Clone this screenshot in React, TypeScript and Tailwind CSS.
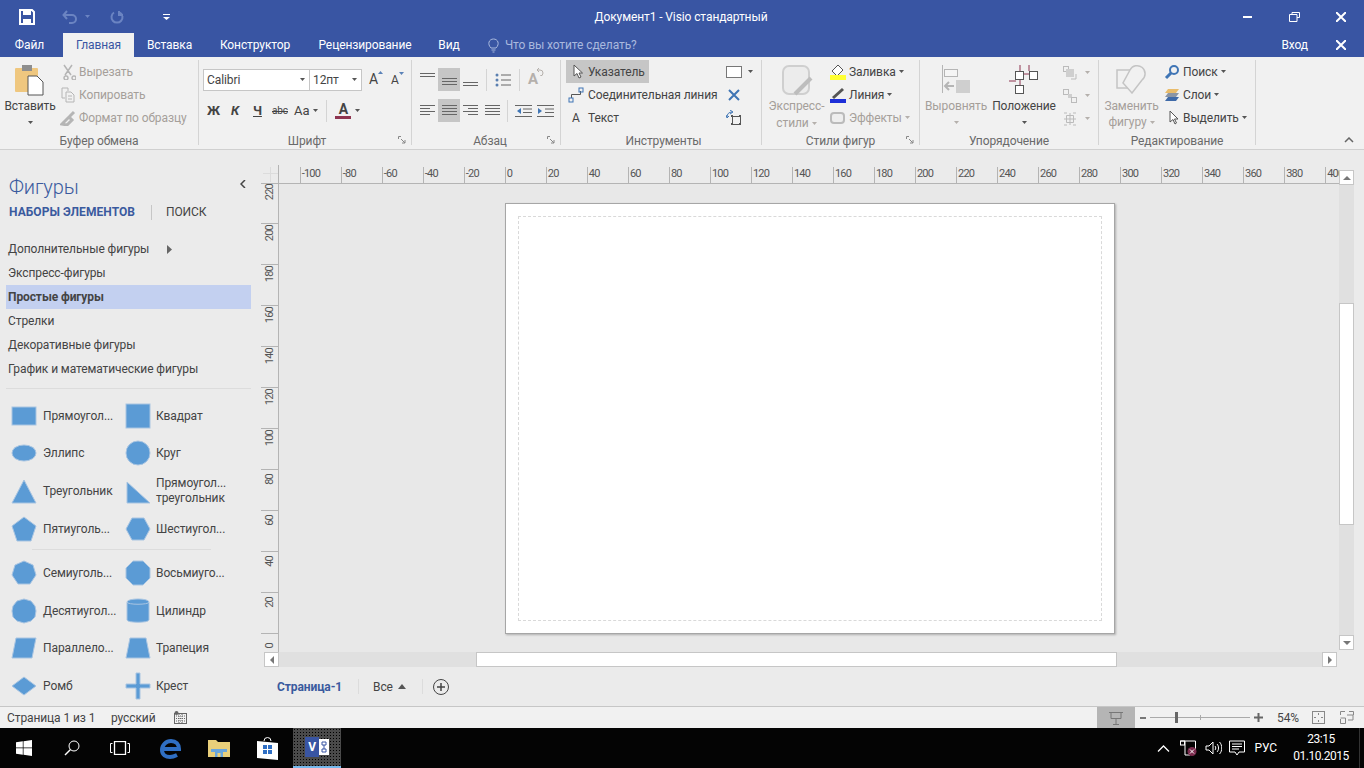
import type { ReactNode } from "react";

const hTicks = Array.from({ length: 27 }, (_, i) => -120 + i * 20);
const vTicks = Array.from({ length: 12 }, (_, i) => 220 - i * 20);

const stencils = ["Дополнительные фигуры", "Экспресс-фигуры", "Простые фигуры", "Стрелки", "Декоративные фигуры", "График и математические фигуры"];

const Caret = ({ dim = false }: { dim?: boolean }) => (
  <svg width="5" height="3" viewBox="0 0 5 3" className="shrink-0">
    <polygon points="0,0 5,0 2.500,3" fill={dim ? "#b5b0ac" : "#555"} />
  </svg>
);

const Shape = ({ children }: { children: ReactNode }) => (
  <svg width="26" height="28" viewBox="0 0 26 28" className="shrink-0">
    <g fill="#5b9bd5" stroke="#a9c5e2" strokeWidth="1">{children}</g>
  </svg>
);

const shapesTop: [string, ReactNode, string, ReactNode][] = [
  ["Прямоугол...", <rect x="1" y="5" width="24" height="18" />, "Квадрат", <rect x="1" y="2" width="24" height="24" />],
  ["Эллипс", <ellipse cx="13" cy="14" rx="12" ry="8" />, "Круг", <circle cx="13" cy="14" r="12" />],
  ["Треугольник", <polygon points="13,3 25,26 1,26" />, "", <polygon points="2,5 25,26 2,26" />],
  ["Пятиуголь...", <polygon points="13,2 25,11 20,26 6,26 1,11" />, "Шестиугол...", <polygon points="7,3 19,3 25,14 19,25 7,25 1,14" />],
];

const shapesBottom: [string, ReactNode, string, ReactNode][] = [
  ["Семиуголь...", <polygon points="13,2 22,6 25,16 19,25 7,25 1,16 4,6" />, "Восьмиуго...", <polygon points="8,2 18,2 25,9 25,19 18,26 8,26 1,19 1,9" />],
  ["Десятиугол...", <polygon points="13,2 20,4 24,9 25,14 24,20 20,24 13,26 6,24 2,20 1,14 2,9 6,4" />, "Цилиндр", <><path d="M2 5c0-4 22-4 22 0v18c0 3-22 3-22 0z" /><path d="M2 5c0 3 22 3 22 0" fill="none" /></>],
  ["Параллело...", <polygon points="5,4 25,4 21,24 1,24" />, "Трапеция", <polygon points="5,4 21,4 25,24 1,24" />],
  ["Ромб", <polygon points="13,5 25,14 13,23 1,14" />, "Крест", <polygon points="11,1 15,1 15,12 25,12 25,16 15,16 15,27 11,27 11,16 1,16 1,12 11,12" />],
];

const ShapeRow = ({ row }: { row: [string, ReactNode, string, ReactNode] }) => (
  <div className="flex h-[37.6px] items-center pl-[11px]">
    <div className="flex w-[114px] items-center gap-[6px]">
      <Shape>{row[1]}</Shape>
      <span>{row[0]}</span>
    </div>
    <div className="flex items-center gap-[5px]">
      <Shape>{row[3]}</Shape>
      {row[2] ? <span>{row[2]}</span> : <span className="leading-[15px]">Прямоугол...<br />треугольник</span>}
    </div>
  </div>
);

const Lines = ({ rows }: { rows: [number, number][] }) => (
  <svg width="15" height="16" viewBox="0 0 15 16" stroke="#666" strokeWidth="1">
    {rows.map(([y, w], i) => (
      <line key={i} x1={w < 0 ? 15 + w : 0} x2={w < 0 ? 15 : w} y1={y + 0.5} y2={y + 0.5} />
    ))}
  </svg>
);

const Group = ({ label, className, launcher, children }: { label: string; className: string; launcher?: boolean; children: ReactNode }) => (
  <section className={`relative flex h-[85px] shrink-0 flex-col border-r border-[#d4d4d4] ${className}`}>
    <div className="flex h-[74px] shrink-0">{children}</div>
    <div className="flex h-[13px] shrink-0 items-center justify-center leading-none text-[#6a6a6a]">{label}</div>
    {launcher && (
      <svg width="8" height="8" viewBox="0 0 8 8" className="absolute right-[5px] bottom-[1px]" fill="none" stroke="#888">
        <path d="M.5 3V.5H3M3 3l4 4M7 4v3H4" />
      </svg>
    )}
  </section>
);

const TaskIcon = ({ className, children }: { className: string; children: ReactNode }) => (
  <div className={`flex shrink-0 items-center justify-center ${className}`}>{children}</div>
);

const ScrollBtn = ({ dir }: { dir: "u" | "d" | "l" | "r" }) => (
  <div className="flex h-[15px] w-[15px] shrink-0 items-center justify-center border border-[#c6c6c6] bg-white">
    <svg width="8" height="8" viewBox="0 0 8 8" fill="#777">
      {dir === "u" && <polygon points="0,6 8,6 4,2" />}
      {dir === "d" && <polygon points="0,2 8,2 4,6" />}
      {dir === "l" && <polygon points="6,0 6,8 2,4" />}
      {dir === "r" && <polygon points="2,0 2,8 6,4" />}
    </svg>
  </div>
);

export default function App() {
  return (
    <div className="flex h-[768px] w-[1364px] flex-col overflow-hidden bg-[#ebebeb] font-['Roboto','Liberation_Sans',sans-serif] text-[12px] tracking-[-0.1px] text-[#444]">
      {/* заголовок окна */}
      <header className="flex h-[33px] shrink-0 items-center bg-[#3955a3] text-white">
        <div className="flex w-[546px] items-center pl-[19px]">
          <svg width="16" height="16" viewBox="0 0 16 16" className="mr-[27px]">
            <path d="M1 1h12l2 2v12H1z" fill="none" stroke="#fff" strokeWidth="2" />
            <rect x="4" y="1" width="8" height="5" fill="#fff" />
            <rect x="4" y="10" width="8" height="5" fill="#fff" />
          </svg>
          <svg width="16" height="14" viewBox="0 0 16 14" fill="none" stroke="#6b84c2" strokeWidth="2" className="mr-[7px]">
            <path d="M5 1 1.500 5 5 9M2 5h8a3.500 3.500 0 0 1 0 8H7" />
          </svg>
          <svg width="5" height="3" viewBox="0 0 5 3" className="mr-[20px]"><polygon points="0,0 5,0 2.500,3" fill="#6b84c2" /></svg>
          <svg width="14" height="14" viewBox="0 0 14 14" fill="none" stroke="#6b84c2" strokeWidth="2" className="mr-[39px]">
            <path d="M4 2.500a5.500 5.500 0 1 0 6 0M9 1v4h4" />
          </svg>
          <svg width="7" height="6" viewBox="0 0 7 6" fill="#fff"><rect width="7" height="1" /><polygon points="0,3 7,3 3.500,6" /></svg>
        </div>
        <div className="w-[270px] text-center text-[12px]">Документ1 - Visio стандартный</div>
        <div className="ml-auto flex items-center">
          <div className="mr-[37px] h-[2px] w-[9px] bg-white" />
          <svg width="11" height="10" viewBox="0 0 11 10" fill="none" stroke="#fff" className="mr-[36px]">
            <path d="M3 2.500V.5h7.500v5H8M.5 2.500h7.500v7H.5z" />
          </svg>
          <svg width="10" height="10" viewBox="0 0 10 10" stroke="#fff" strokeWidth="2" className="mr-[18px]"><path d="M0 0l10 10M10 0 0 10" /></svg>
        </div>
      </header>

      {/* вкладки */}
      <nav className="flex h-[24px] shrink-0 items-center bg-[#3955a3] text-white">
        <div className="w-[63px] pr-[4px] text-center">Файл</div>
        <div className="flex h-full w-[71px] items-center justify-center bg-[#f1f1f1] text-[#3955a3]">Главная</div>
        <div className="w-[71px] text-center">Вставка</div>
        <div className="w-[100px] text-center">Конструктор</div>
        <div className="w-[120px] text-center">Рецензирование</div>
        <div className="w-[48px] text-center">Вид</div>
        <svg width="11" height="15" viewBox="0 0 11 15" fill="none" stroke="#a9b9de" className="ml-[15px] mr-[6px]">
          <path d="M3 10C-1 6 1 1 5.500 1S12 6 8 10zM3.500 12h4M4.500 14h2" />
        </svg>
        <div className="text-[#a9b9de]">Что вы хотите сделать?</div>
        <div className="ml-auto mr-[28px]">Вход</div>
        <svg width="10" height="10" viewBox="0 0 10 10" stroke="#fff" strokeWidth="2" className="mr-[18px]"><path d="M0 0l10 10M10 0 0 10" /></svg>
      </nav>

      {/* лента */}
      <div className="relative flex h-[93px] shrink-0 items-start border-b border-[#d0d0d0] bg-[#f1f1f1] pt-[3px]">
        <Group label="Буфер обмена" launcher={false} className="w-[199px]">
          <div className="flex w-[60px] flex-col items-center">
            <svg width="30" height="32" viewBox="0 0 30 32" className="mt-[4px] -translate-x-[1px]">
              <rect x="1" y="4" width="23" height="24" rx="1" fill="#efc77f" />
              <rect x="8" y="1" width="10" height="6" fill="#8e8e8e" />
              <path d="M14 12h9l6 6v13H14z" fill="#fff" stroke="#555" />
            </svg>
            <div className="mt-[3px] leading-[15px]">Вставить</div>
            <div className="mt-[7px]"><Caret /></div>
          </div>
          <div className="flex flex-col text-[#a59f9a]">
            {["Вырезать", "Копировать", "Формат по образцу"].map((t, i) => (
              <div key={t} className="flex h-[23px] items-center gap-[3px]">
                <svg width="16" height="16" viewBox="0 0 16 16" fill="none" stroke="#b5b5b5" strokeWidth="1.500">
                  {i === 0 && <path d="M4 1l7 10M12 1 5 11M4 14a2 2 0 1 0 0-.1zM12 14a2 2 0 1 0 0-.1z" />}
                  {i === 1 && <path d="M2 1h6v3M2 1v10h3M6 5h5l3 3v7H6zM8 9h4M8 12h4" strokeWidth="1" />}
                  {i === 2 && <path d="M2 14l7-7 3 3-5 5zM10 6l4-4" strokeWidth="3" />}
                </svg>
                <span>{t}</span>
              </div>
            ))}
          </div>
        </Group>

        <Group label="Шрифт" launcher className="w-[213px] pl-[4px]">
          <div className="flex flex-col">
            <div className="mt-[8px] flex h-[23px] items-center">
              <div className="flex h-[22px] w-[107px] items-center justify-between border border-[#c6c6c6] bg-white pl-[3px] pr-[4px]">Calibri <Caret /></div>
              <div className="flex h-[22px] w-[52px] items-center justify-between border border-l-0 border-[#c6c6c6] bg-white pl-[3px] pr-[4px]">12пт <Caret /></div>
              <span className="relative ml-[7px] text-[14px]">A<svg width="5" height="3" viewBox="0 0 5 3" className="absolute -right-[5px] top-[2px]"><polygon points="0,3 5,3 2.500,0" fill="#5a82b8" /></svg></span>
              <span className="relative ml-[13px] text-[12px]">A<svg width="5" height="3" viewBox="0 0 5 3" className="absolute -right-[5px] top-[1px]"><polygon points="0,0 5,0 2.500,3" fill="#5a82b8" /></svg></span>
            </div>
            <div className="mt-[8px] flex h-[23px] items-center">
              <b className="ml-[4px] w-[24px] text-[13px]">Ж</b>
              <b className="w-[22px] text-[13px] italic">К</b>
              <b className="w-[19px] text-[13px] underline">Ч</b>
              <span className="w-[22px] text-[10px] line-through">abc</span>
              <span className="mr-[4px] text-[13px]">Aa</span>
              <Caret />
              <div className="mx-[8px] h-[22px] w-px bg-[#d4d4d4]" />
              <div className="mr-[4px] flex w-[16px] flex-col items-center">
                <b className="text-[14px] leading-[14px]">A</b>
                <div className="h-[3px] w-[16px] bg-[#8e3450]" />
              </div>
              <Caret />
            </div>
          </div>
        </Group>

        <Group label="Абзац" launcher className="w-[149px] pl-[8px]">
          <div className="flex flex-col">
            <div className="mt-[8px] flex h-[23px] items-center">
              <Lines rows={[[1, 15], [4, 15]]} />
              <div className="mx-[3px] flex h-[23px] w-[22px] items-center justify-center bg-[#c6c6c6]"><Lines rows={[[6, 15], [9, 15], [12, 15]]} /></div>
              <Lines rows={[[10, 15], [13, 15]]} />
              <div className="mx-[8px] h-[22px] w-px bg-[#d4d4d4]" />
              <svg width="16" height="16" viewBox="0 0 16 16"><g fill="#5a7fb0"><circle cx="2" cy="3" r="1.500" /><circle cx="2" cy="8" r="1.500" /><circle cx="2" cy="13" r="1.500" /></g><path d="M6 3h10M6 8h10M6 13h10" stroke="#666" /></svg>
              <div className="mx-[8px] h-[22px] w-px bg-[#d4d4d4]" />
              <span className="relative text-[15px] font-bold text-[#b5b0ac]">A<svg width="8" height="9" viewBox="0 0 8 9" fill="none" stroke="#b5b0ac" className="absolute -right-[6px] -top-[1px]"><path d="M3 1 1 3l2 2M1 3h3a3 3 0 0 1 0 6" /></svg></span>
            </div>
            <div className="mt-[8px] flex h-[23px] items-center">
              <Lines rows={[[2, 15], [5, 10], [8, 15], [11, 10]]} />
              <div className="mx-[3px] flex h-[23px] w-[22px] items-center justify-center bg-[#c6c6c6]"><Lines rows={[[2, 15], [5, 15], [8, 15], [11, 15]]} /></div>
              <Lines rows={[[2, 15], [5, -10], [8, 15], [11, -10]]} />
              <div className="w-[7px]" />
              <Lines rows={[[2, 15], [5, 15], [8, 15], [11, 15]]} />
              <div className="mx-[7px] h-[22px] w-px bg-[#d4d4d4]" />
              <svg width="17" height="14" viewBox="0 0 17 14" className="mr-[5px]"><path d="M0 1.500h17M8 5h9M8 8.500h9M0 12.500h17" stroke="#666" /><path d="M6 4 2 7l4 3z" fill="#3f75b5" /></svg>
              <svg width="17" height="14" viewBox="0 0 17 14"><path d="M0 1.500h17M8 5h9M8 8.500h9M0 12.500h17" stroke="#666" /><path d="M1 4l4 3-4 3z" fill="#3f75b5" /></svg>
            </div>
          </div>
        </Group>

        <Group label="Инструменты" className="w-[201px] pl-[5px]">
          <div className="flex w-[155px] flex-col">
            <div className="flex h-[23px] w-[83px] items-center bg-[#c6c6c6] pl-[7px]">
              <svg width="10" height="15" viewBox="0 0 10 15" fill="#fff" stroke="#555" className="mr-[5px]"><path d="M1 1v11l3-2.500 2 4.500 2-1-2-4h3.500z" /></svg>
              Указатель
            </div>
            <div className="flex h-[23px] items-center pl-[2px]">
              <svg width="16" height="16" viewBox="0 0 16 16" fill="none" className="mr-[4px]"><path d="M3.500 11V7.500h9V4" stroke="#555" /><rect x="1" y="11" width="4" height="4" stroke="#3f75b5" /><rect x="11" y="1" width="4" height="4" stroke="#3f75b5" /></svg>
              Соединительная линия
            </div>
            <div className="flex h-[23px] items-center pl-[6px]">
              <span className="mr-[8px] w-[8px] text-[12px]">A</span>
              Текст
            </div>
          </div>
          <div className="flex flex-col">
            <div className="flex h-[23px] items-center">
              <div className="mr-[6px] ml-[5px] h-[12px] w-[16px] border border-[#777] bg-white" />
              <Caret />
            </div>
            <div className="flex h-[23px] items-center pl-[7px]">
              <svg width="12" height="12" viewBox="0 0 12 12" stroke="#3f75b5" strokeWidth="2"><path d="M1 1l10 10M11 1 1 11" /></svg>
            </div>
            <div className="flex h-[23px] items-center pl-[5px]">
              <svg width="16" height="16" viewBox="0 0 16 16" fill="none"><rect x="6.500" y="6.500" width="8" height="8" stroke="#555" /><path d="M1 7c0-3 2-5 5-5M4 0l3 2-3 2M0 5l1 3 2-2" stroke="#3f75b5" /><g fill="#555"><rect x="5" y="5" width="2" height="2" /><rect x="13" y="5" width="2" height="2" /><rect x="5" y="13" width="2" height="2" /><rect x="13" y="13" width="2" height="2" /></g></svg>
            </div>
          </div>
        </Group>

        <Group label="Стили фигур" launcher className="w-[158px] text-[#a59f9a]">
          <div className="flex w-[68px] flex-col items-center pl-[1px]">
            <svg width="32" height="32" viewBox="0 0 32 32" className="mt-[4px]">
              <rect x="2" y="2" width="26" height="28" rx="6" fill="#ececec" stroke="#cfcfcf" strokeWidth="2" />
              <path d="M14 30 30 14" stroke="#bdbdbd" strokeWidth="4" />
            </svg>
            <div className="mt-[3px] leading-[15px]">Экспресс-</div>
            <div className="mt-[1px] flex items-center gap-[3px] leading-[16px]">стили <Caret dim /></div>
          </div>
          <div className="flex flex-col">
            <div className="flex h-[23px] items-center text-[#444]">
              <svg width="16" height="16" viewBox="0 0 16 16" className="mr-[3px]"><path d="M8 1 2 7l5 5 6-6z" fill="#fff" stroke="#555" /><rect y="11" width="16" height="5" fill="#ffff33" /></svg>
              <span className="mr-[3px]">Заливка</span><Caret />
            </div>
            <div className="flex h-[23px] items-center text-[#444]">
              <svg width="16" height="16" viewBox="0 0 16 16" className="mr-[3px]"><path d="M3 11 13 2" stroke="#555" strokeWidth="3" /><rect y="12" width="16" height="4" fill="#1d2fd8" /></svg>
              <span className="mr-[3px]">Линия</span><Caret />
            </div>
            <div className="flex h-[23px] items-center">
              <svg width="16" height="16" viewBox="0 0 16 16" className="mr-[3px]"><rect x="1" y="3" width="13" height="10" rx="3" fill="#eee" stroke="#bbb" strokeWidth="2" /></svg>
              <span className="mr-[3px]">Эффекты</span><Caret dim />
            </div>
          </div>
        </Group>

        <Group label="Упорядочение" className="w-[179px]">
          <div className="flex w-[72px] flex-col items-center text-[#a59f9a]">
            <svg width="28" height="30" viewBox="0 0 28 30" className="mt-[5px]">
              <path d="M.5 0v28" stroke="#b5b5b5" />
              <rect x="2.500" y="4.500" width="13" height="7" fill="#f5f5f5" stroke="#b5b5b5" />
              <rect x="14" y="15" width="14" height="13" fill="#cfcfcf" />
              <path d="M3 21h9M7 17l-4 4 4 4" stroke="#b5b5b5" strokeWidth="2" fill="none" />
            </svg>
            <div className="mt-[4px] leading-[15px]">Выровнять</div>
            <div className="mt-[7px]"><Caret dim /></div>
          </div>
          <div className="flex w-[64px] flex-col items-center">
            <svg width="30" height="30" viewBox="0 0 30 30" className="mt-[5px]" fill="#fff">
              <path d="M0 16h7M7 9h13M11 0v6M20 0v6M11 13v8" stroke="#8e3450" fill="none" />
              <rect x="6.500" y="6.500" width="8" height="8" stroke="#555" />
              <rect x="20.500" y="6.500" width="8" height="8" stroke="#555" />
              <rect x="6.500" y="20.500" width="8" height="8" stroke="#555" />
            </svg>
            <div className="mt-[4px] leading-[15px]">Положение</div>
            <div className="mt-[7px]"><Caret /></div>
          </div>
          <div className="flex flex-col pl-[7px] pt-[1px]">
            {[0, 1, 2].map(i => (
              <div key={i} className="flex h-[23px] items-center gap-[8px]">
                <svg width="14" height="14" viewBox="0 0 14 14" fill="none" stroke="#bbb">
                  {i === 0 && <><rect x=".5" y=".5" width="5" height="5" /><rect x="3" y="3" width="8" height="8" fill="#cfcfcf" stroke="none" /><path d="M13 8v5H8" /></>}
                  {i === 1 && <><rect x=".5" y=".5" width="5" height="5" /><rect x="5" y="5" width="4" height="4" fill="#cfcfcf" stroke="none" /><rect x="8.500" y="8.500" width="5" height="5" /></>}
                  {i === 2 && <path d="M1 1h3M10 1h3M1 13h3M10 13h3M3.500 3.500h7v7h-7zM7 1v12M1 7h12" />}
                </svg>
                <Caret dim />
              </div>
            ))}
          </div>
        </Group>

        <Group label="Редактирование" className="w-[157px]">
          <div className="flex w-[65px] flex-col items-center text-[#a59f9a]">
            <svg width="32" height="30" viewBox="0 0 32 30" className="mt-[4px] ml-[1px]" fill="none" stroke="#c4c4c4" strokeWidth="1.500">
              <rect x="1" y="6" width="18" height="18" />
              <path d="M14 6a8 8 0 1 1 12 10L16 29 7 19z" fill="#f1f1f1" />
            </svg>
            <div className="mt-[5px] leading-[15px]">Заменить</div>
            <div className="flex items-center gap-[3px] leading-[16px]">фигуру <Caret dim /></div>
          </div>
          <div className="flex flex-col">
            {["Поиск", "Слои", "Выделить"].map((t, i) => (
              <div key={t} className="flex h-[23px] items-center">
                <svg width="16" height="16" viewBox="0 0 16 16" fill="none" className="mr-[3px] shrink-0">
                  {i === 0 && <><circle cx="10" cy="6" r="4" stroke="#3f75b5" strokeWidth="2" /><path d="M7 9l-5 5" stroke="#3f75b5" strokeWidth="3" /></>}
                  {i === 1 && <><polygon points="4,2 15,2 12,6 1,6" fill="#e9bc6b" /><polygon points="4,6 15,6 12,10 1,10" fill="#8c96a5" /><polygon points="4,10 15,10 12,14 1,14" fill="#3f6aa8" /></>}
                  {i === 2 && <path d="M6 1v11l3-2.500 2 4.500 1.500-1-2-4H14z" fill="#fff" stroke="#555" />}
                </svg>
                <span className="mr-[3px]">{t}</span><Caret />
              </div>
            ))}
          </div>
        </Group>

        <svg width="10" height="6" viewBox="0 0 10 6" fill="none" stroke="#666" strokeWidth="1.500" className="absolute right-[10px] bottom-[6px]"><path d="M1 5l4-4 4 4" /></svg>
      </div>

      {/* основная часть */}
      <div className="flex h-[556px] shrink-0">
        <aside className="flex w-[261px] shrink-0 flex-col">
          <div className="flex h-[51px] shrink-0 items-end justify-between pl-[9px] pr-[15px]">
            <span className="text-[20px] font-light leading-[28px] text-[#3a5a9e]">Фигуры</span>
            <svg width="6" height="8" viewBox="0 0 6 8" className="mb-[13px]"><path d="M5 0 1 4l4 4" fill="none" stroke="#444" strokeWidth="1.500" /></svg>
          </div>
          <div className="flex h-[21px] shrink-0 items-center pl-[9px] pt-[1px]">
            <b className="w-[142px] tracking-[0.05px] text-[#3a5a9e]">НАБОРЫ ЭЛЕМЕНТОВ</b>
            <div className="mr-[14px] h-[15px] w-px bg-[#c6c6c6]" />
            <span>ПОИСК</span>
          </div>
          <ul className="ml-[6px] mt-[15px] w-[245px]">
            {stencils.map((s, i) => (
              <li key={s} className={`flex h-[24px] items-center pl-[2px] ${i === 2 ? "bg-[#c3d0f0] font-bold" : ""}`}>
                {s}
                {i === 0 && <svg width="5" height="9" viewBox="0 0 5 9" className="ml-[18px]"><polygon points="0,0 5,4.500 0,9" fill="#666" /></svg>}
              </li>
            ))}
          </ul>
          <div className="ml-[6px] mt-[7px] h-px w-[245px] bg-[#dcdcdc]" />
          <div className="mt-[8px]">
            {shapesTop.map((r, i) => <ShapeRow key={i} row={r} />)}
          </div>
          <div className="ml-[32px] mt-[2px] h-px w-[179px] bg-[#dcdcdc]" />
          <div className="mt-[4px]">
            {shapesBottom.map((r, i) => <ShapeRow key={i} row={r} />)}
          </div>
        </aside>

        <div className="flex min-w-0 flex-1 flex-col">
          <div className="flex h-[502px] shrink-0 pt-[15px]">
            <div className="flex w-[1078px] shrink-0 flex-col">
              <div className="flex h-[19px] shrink-0">
                <div className="relative w-[18px] shrink-0 border-b border-r border-[#b4b4b4]">
                  <div className="absolute left-[2px] top-[8px] h-px w-[15px] bg-[#dcdcdc]" />
                  <div className="absolute left-[9px] top-[2px] h-[15px] w-px bg-[#dcdcdc]" />
                </div>
                <div className="flex flex-1 overflow-hidden border-b border-[#b4b4b4] pt-[2px]">
                  <div className="-ml-[20.28px] flex">
                    {hTicks.map(t => (
                      <div key={t} className="h-[16px] w-[41.03px] shrink-0 border-l border-[#b4b4b4] pl-[1px] text-[11px] leading-[14px] tracking-[-0.8px] text-[#555]">{t > -120 ? t : ""}</div>
                    ))}
                  </div>
                </div>
              </div>
              <div className="flex min-h-0 flex-1">
                <div className="w-[18px] shrink-0 overflow-hidden border-r border-[#b4b4b4]">
                  <div className="-mt-[1.7px]">
                    {vTicks.map(t => (
                      <div key={t} className="h-[41.03px] border-t border-[#b4b4b4] pl-[2px] pt-[1px]">
                        <span className="rotate-180 text-[11px] leading-[13px] tracking-[-0.8px] text-[#555] [writing-mode:vertical-rl]">{t}</span>
                      </div>
                    ))}
                  </div>
                </div>
                <main className="flex-1 bg-[#e8e8e8] pl-[226px] pt-[19px]">
                  <div className="h-[431px] w-[610px] border border-[#a6a6a6] bg-white p-[12px] shadow-[1px_1px_2px_rgba(0,0,0,0.25)]">
                    <div className="h-full w-full border border-dashed border-[#d9d9d9]" />
                  </div>
                </main>
              </div>
            </div>
            <div className="mt-[5px] flex h-[480px] w-[15px] shrink-0 flex-col self-start">
              <ScrollBtn dir="u" />
              <div className="min-h-0 flex-1 bg-[#e0e0e0] pt-[118px]">
                <div className="h-[222px] border border-[#c6c6c6] bg-white" />
              </div>
              <ScrollBtn dir="d" />
            </div>
          </div>
          <div className="flex h-[15px] shrink-0 pl-[3px]">
            <ScrollBtn dir="l" />
            <div className="w-[1043px] bg-[#e0e0e0] pl-[197px]">
              <div className="h-[15px] w-[641px] border border-[#c6c6c6] bg-white" />
            </div>
            <ScrollBtn dir="r" />
          </div>
          <div className="flex h-[39px] shrink-0 items-center pl-[16px]">
            <b className="w-[81px] text-[#3a5a9e]">Страница-1</b>
            <div className="mr-[14px] h-[15px] w-px bg-[#dcdcdc]" />
            <span className="w-[25px]">Все</span>
            <svg width="8" height="5" viewBox="0 0 8 5" className="shrink-0"><polygon points="0,5 8,5 4,0" fill="#555" /></svg>
            <div className="ml-[16px] mr-[10px] h-[15px] w-px bg-[#dcdcdc]" />
            <svg width="16" height="16" viewBox="0 0 16 16" fill="none" stroke="#444">
              <circle cx="8" cy="8" r="7.500" />
              <path d="M8 4v8M4 8h8" strokeWidth="1.500" />
            </svg>
          </div>
        </div>
      </div>

      {/* строка состояния */}
      <footer className="flex h-[22px] shrink-0 items-center border-t border-[#c6c6c6] bg-[#f1f1f1] pl-[7px]">
        <span className="w-[104px]">Страница 1 из 1</span>
        <span className="w-[63px]">русский</span>
        <svg width="13" height="13" viewBox="0 0 13 13" fill="none" stroke="#666"><rect x=".5" y="2.500" width="12" height="10" /><path d="M2 5h9M2 7.500h9M2 10h9M5 3v9M8 3v9" strokeDasharray="1 1" /><circle cx="2.500" cy="2" r="2" fill="#666" stroke="none" /></svg>
        <div className="ml-auto flex h-full w-[38px] items-center justify-center bg-[#b5b5b5]">
          <svg width="14" height="14" viewBox="0 0 14 14" fill="none" stroke="#777"><path d="M0 1.500h14M2 1.500v6h10v-6M7 8v5M4 13.500h6" /></svg>
        </div>
        <div className="ml-[5px] h-[2px] w-[6px] bg-[#777]" />
        <div className="relative ml-[4px] h-px w-[100px] bg-[#aaa]">
          <div className="absolute left-[25px] -top-[5px] h-[11px] w-[3px] bg-[#666]" />
          <div className="absolute left-[50px] -top-[2px] h-[5px] w-px bg-[#aaa]" />
        </div>
        <svg width="9" height="9" viewBox="0 0 9 9" stroke="#666" strokeWidth="2" className="ml-[4px]"><path d="M4.500 0v9M0 4.500h9" /></svg>
        <span className="ml-[14px] w-[35px]">54%</span>
        <svg width="13" height="13" viewBox="0 0 13 13" fill="none" stroke="#888"><rect x=".5" y=".5" width="12" height="12" /><path d="M6.500 2v2M6.500 9v2M2 6.500h2M9 6.500h2" /></svg>
        <svg width="14" height="13" viewBox="0 0 14 13" fill="none" stroke="#888" className="ml-[15px] mr-[10px]"><path d="M.5 4V.5H5M9 .5h4.500V4M.5 8v4.500h5V7h-5M7 4h6v5H8" /></svg>
      </footer>

      {/* панель задач */}
      <div className="flex h-[40px] shrink-0 items-center bg-[#040404] text-white">
        <TaskIcon className="w-[48px]">
          <svg width="16" height="16" viewBox="0 0 16 16" fill="#fff"><polygon points="0,2.300 6.800,1.300 6.800,7.500 0,7.500" /><polygon points="7.500,1.200 16,0 16,7.500 7.500,7.500" /><polygon points="0,8.300 6.800,8.300 6.800,14.700 0,13.700" /><polygon points="7.500,8.300 16,8.300 16,16 7.500,14.800" /></svg>
        </TaskIcon>
        <TaskIcon className="w-[48px]">
          <svg width="16" height="16" viewBox="0 0 16 16" fill="none" stroke="#fff"><circle cx="10" cy="6" r="5" /><path d="M6.500 9.500 1 15" strokeWidth="1.500" /></svg>
        </TaskIcon>
        <TaskIcon className="w-[48px]">
          <svg width="20" height="14" viewBox="0 0 20 14" fill="none" stroke="#fff"><rect x="4.500" y=".5" width="11" height="13" strokeWidth="1.300" /><path d="M2.500 2.500h-2v9h2M17.500 2.500h2v9h-2" /></svg>
        </TaskIcon>
        <TaskIcon className="w-[52px]">
          <svg width="21" height="21" viewBox="0 0 21 21" fill="none" stroke="#2f6fc4" strokeWidth="4"><path d="M3 11h16c0-5-3-8-8-8-5 0-9 4-9 9 0 5 4 7 8 7 3 0 5-1 7-2" /></svg>
        </TaskIcon>
        <TaskIcon className="w-[46px]">
          <svg width="22" height="18" viewBox="0 0 22 18"><path d="M0 1h8l2 2h12v15H0z" fill="#e9cf7a" /><rect x="3" y="10" width="16" height="3" fill="#6aa6dc" /><rect x="7" y="11" width="8" height="7" fill="#6aa6dc" /><rect x="9.500" y="14" width="3" height="4" fill="#e9cf7a" /></svg>
        </TaskIcon>
        <TaskIcon className="w-[51px]">
          <svg width="21" height="24" viewBox="0 0 21 24"><path d="M7 5a3.500 3.500 0 0 1 7 0" fill="none" stroke="#fff" /><polygon points="0,5 21,7 21,24 0,22" fill="#fff" /><g fill="#2f6fc4"><rect x="6" y="9" width="4" height="4" /><rect x="11" y="9" width="4" height="4" /><rect x="6" y="14" width="4" height="4" /><rect x="11" y="14" width="4" height="4" /></g></svg>
        </TaskIcon>
        <div className="flex h-full w-[48px] shrink-0 items-center justify-center border-b-2 border-[#76b9ed] bg-[#2e2e2e] bg-[radial-gradient(#000_0.7px,#4a4a4a_0.7px)] bg-[length:3px_3px]">
          <div className="flex items-center">
            <div className="flex h-[20px] w-[14px] items-center justify-center bg-[#3955a3] text-[12px] font-bold">V</div>
            <svg width="10" height="16" viewBox="0 0 10 16"><rect width="10" height="16" fill="#fff" /><path d="M3 3h4v3H3zM5 6v4M3 10h4v3H3z" fill="none" stroke="#3955a3" /></svg>
          </div>
        </div>

        <div className="ml-auto flex items-center">
          <svg width="13" height="7" viewBox="0 0 13 7" fill="none" stroke="#fff" strokeWidth="1.300" className="mr-[10px]"><path d="M1 6.500 6.500 1 12 6.500" /></svg>
          <svg width="17" height="16" viewBox="0 0 17 16" fill="none" stroke="#fff" className="mr-[8px]"><path d="M.5 1h15v9M5 1v14h5" /><rect x=".5" y="1" width="4" height="4" /><circle cx="12" cy="11.500" r="4.500" fill="#7b2c4e" stroke="none" /><path d="M10 9.500l4 4M14 9.500l-4 4" /></svg>
          <svg width="17" height="14" viewBox="0 0 17 14" fill="none" stroke="#fff" className="mr-[7px]"><path d="M1 5h3l4-4v12l-4-4H1zM10 5c1 1 1 3 0 4M12 3c2 2 2 6 0 8M14.500 1c3 3 3 9 0 12" /></svg>
          <svg width="16" height="16" viewBox="0 0 16 16" fill="none" stroke="#fff" className="mr-[10px]"><path d="M.5 1h15v11H10l-2 3-2-3H.5zM3 4h10M3 6.500h10M3 9h7" /></svg>
          <span className="mr-[16px] text-[12px]">РУС</span>
          <div className="mr-[10px] flex w-[56px] flex-col items-center text-[12px] leading-[17px] tracking-[-0.5px]">
            <span>23:15</span>
            <span>01.10.2015</span>
          </div>
          <div className="mr-[4px] h-[40px] w-px bg-[#333]" />
        </div>
      </div>
    </div>
  );
}
